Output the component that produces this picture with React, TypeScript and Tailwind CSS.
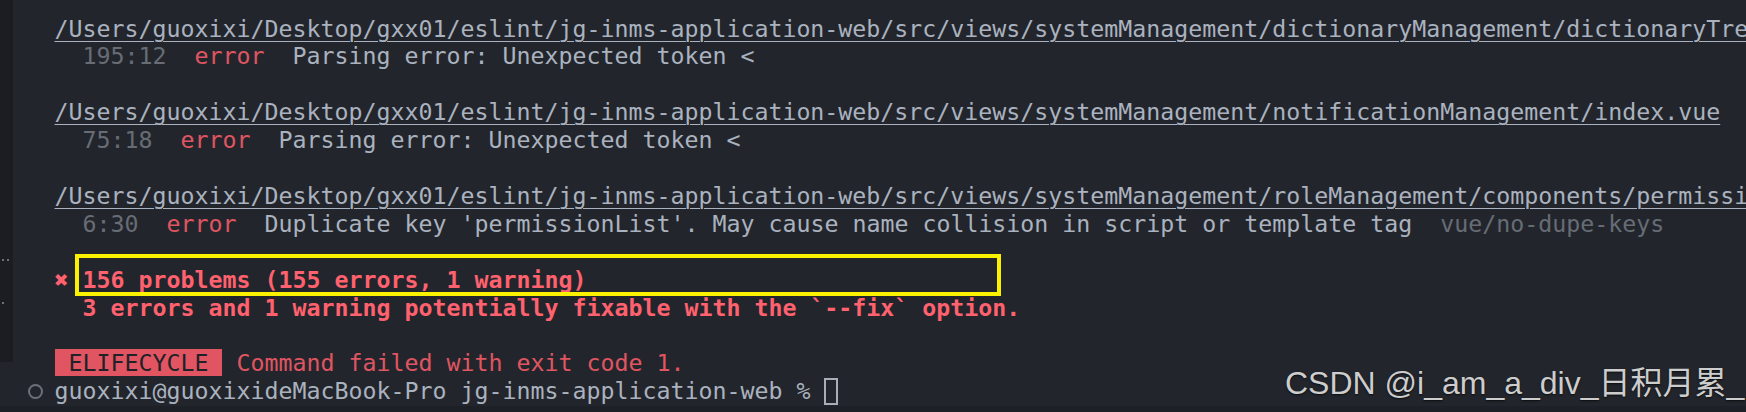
export default function App() {
  const pathCls = "underline decoration-1 underline-offset-[4px]";
  const blank = <div className="h-[27.9px]" />;

  return (
    <div className="relative flex h-[412px] w-[1746px] flex-col overflow-hidden bg-[#22262c]">
      <div className="flex min-h-0 flex-1">
        {/* left gutter strip */}
        <div className="relative h-[362px] w-[13px] shrink-0 bg-[#1b1d22]">
          <span className="absolute left-[2px] top-[259px] h-[2px] w-[2px] rounded-full bg-[#8a8f98]" />
          <span className="absolute left-[7px] top-[259px] h-[2px] w-[2px] rounded-full bg-[#8a8f98]" />
          <span className="absolute left-[2px] top-[302px] h-[2px] w-[2px] rounded-full bg-[#8a8f98]" />
        </div>

        {/* terminal output */}
        <div className="min-w-0 flex-1 overflow-hidden whitespace-pre pl-[41.5px] pt-[14.5px] font-['DejaVu_Sans_Mono',monospace] text-[23.25px] leading-[27.9px] text-[#abb2bf]">
          <div>
            <span className={pathCls}>
              /Users/guoxixi/Desktop/gxx01/eslint/jg-inms-application-web/src/views/systemManagement/dictionaryManagement/dictionaryTree.vue
            </span>
          </div>
          <div>
            {"  "}
            <span className="text-[#676c75]">195:12</span>
            {"  "}
            <span className="text-[#e05561]">error</span>
            {"  Parsing error: Unexpected token <"}
          </div>
          {blank}
          <div>
            <span className={pathCls}>
              /Users/guoxixi/Desktop/gxx01/eslint/jg-inms-application-web/src/views/systemManagement/notificationManagement/index.vue
            </span>
          </div>
          <div>
            {"  "}
            <span className="text-[#676c75]">75:18</span>
            {"  "}
            <span className="text-[#e05561]">error</span>
            {"  Parsing error: Unexpected token <"}
          </div>
          {blank}
          <div>
            <span className={pathCls}>
              /Users/guoxixi/Desktop/gxx01/eslint/jg-inms-application-web/src/views/systemManagement/roleManagement/components/permissionList.vue
            </span>
          </div>
          <div>
            {"  "}
            <span className="text-[#676c75]">6:30</span>
            {"  "}
            <span className="text-[#e05561]">error</span>
            {"  Duplicate key 'permissionList'. May cause name collision in script or template tag  "}
            <span className="text-[#676c75]">vue/no-dupe-keys</span>
          </div>
          {blank}
          <div className="font-bold text-[#ff616e]">✖ 156 problems (155 errors, 1 warning)</div>
          <div className="font-bold text-[#ff616e]">
            {"  3 errors and 1 warning potentially fixable with the `--fix` option."}
          </div>
          {blank}
          <div>
            <span className="bg-[#e05561] text-[#1f2228]"> ELIFECYCLE </span>
            <span className="text-[#e05561]"> Command failed with exit code 1.</span>
          </div>
          <div className="relative">
            <span className="absolute -left-[26.5px] top-[7px] h-[15px] w-[15px] rounded-full border-2 border-[#6b707a]" />
            {"guoxixi@guoxixideMacBook-Pro jg-inms-application-web % "}
            <span className="mt-[1px] inline-block h-[27px] w-[14px] border-2 border-[#a8aeb8] align-top" />
          </div>
        </div>
      </div>
      <div className="h-[6px] shrink-0 bg-[#1d2026]" />

      {/* annotation box */}
      <div className="absolute left-[75px] top-[254px] h-[42px] w-[926px] border-4 border-[#faf200]" />

      {/* watermark */}
      <div className="absolute left-[1285px] top-[367px] whitespace-pre font-['Liberation_Sans','Noto_Sans_CJK_SC',sans-serif] text-[32px] leading-none text-[#cdcdcd] [text-shadow:0_1px_2px_rgba(0,0,0,0.7)]">
        CSDN @i_am_a_div_日积月累_
      </div>
    </div>
  );
}
